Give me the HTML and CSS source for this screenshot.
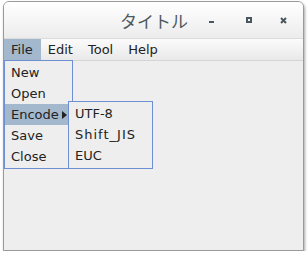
FILE: index.html
```html
<!DOCTYPE html>
<html lang="ja">
<head>
  <meta charset="UTF-8">
  <title>タイトル</title>
  <link rel="stylesheet" href="styles.css">
</head>
<body>
  <div class="window">
    <div class="titlebar">
      <span class="title">タイトル</span>
      <div class="controls">
        <span class="btn btn-min"></span>
        <span class="btn btn-max"></span>
        <span class="btn btn-close">
          <svg width="7" height="7" viewBox="0 0 7 7"><path d="M1 1L6 6M6 1L1 6" stroke="#4a575e" stroke-width="2"/></svg>
        </span>
      </div>
    </div>
    <div class="menubar">
      <span class="menu open">File</span>
      <span class="menu">Edit</span>
      <span class="menu">Tool</span>
      <span class="menu">Help</span>
    </div>
    <div class="content">
      <ul class="popup file-menu">
        <li>New</li>
        <li>Open</li>
        <li class="active">Encode<span class="arrow"></span></li>
        <li>Save</li>
        <li>Close</li>
      </ul>
      <ul class="popup encode-menu">
        <li>UTF-8</li>
        <li class="wide">Shift_JIS</li>
        <li>EUC</li>
      </ul>
    </div>
  </div>
</body>
</html>
```

FILE: styles.css
```css
body {
  margin: 0;
  background: #fff;
  font-family: 'DejaVu Sans', sans-serif;
  font-size: 13px;
  color: #222;
}
.window {
  margin: 1px 0 0 3px;
  width: 299px;
  height: 248px;
  border: 1px solid #9a9a9a;
  border-radius: 6px 6px 0 0;
  background: #eeeeee;
  box-shadow: 1px 2px 3px rgba(0,0,0,0.35);
  display: flex;
  flex-direction: column;
  overflow: hidden;
}
.titlebar {
  height: 36px;
  flex: none;
  display: flex;
  align-items: center;
  background: linear-gradient(#ffffff, #ececec);
  border-bottom: 1px solid #dcdcdc;
}
.title {
  margin-left: 116px;
  font-family: 'Noto Sans CJK JP', sans-serif;
  font-size: 17px;
  color: #4f5a60;
}
.controls {
  margin-left: auto;
  margin-right: 16px;
  display: flex;
  align-items: center;
}
.btn {
  width: 7px;
  height: 7px;
  display: flex;
  align-items: center;
  justify-content: center;
}
.btn-min {
  margin-right: 30px;
}
.btn-max {
  margin-right: 28px;
}
.btn-min::before {
  content: '';
  width: 5px;
  height: 2px;
  margin-top: 4px;
  background: #4a575e;
}
.btn-max::before {
  content: '';
  width: 2px;
  height: 2px;
  border: 2px solid #4a575e;
}
.menubar {
  height: 21px;
  flex: none;
  display: flex;
  background: linear-gradient(#fbfbfb, #e9e9e9);
  border-bottom: 1px solid #d4d4d4;
}
.menu {
  padding: 0 8px 0 7px;
  line-height: 21px;
}
.menu.open {
  background: #a3b7cd;
}
.content {
  flex: 1;
  position: relative;
}
.popup {
  position: absolute;
  margin: 0;
  padding: 1px 0 0;
  list-style: none;
  background: #eeeeee;
  border: 1px solid #6e8fd1;
}
.popup li {
  height: 21px;
  line-height: 21px;
  padding-left: 6px;
  position: relative;
}
.popup li.active {
  background: #a3b7cd;
}
.popup li.wide {
  letter-spacing: 1px;
}
.file-menu {
  left: 0;
  top: -1px;
  width: 67px;
  height: 106px;
}
.encode-menu {
  left: 64px;
  top: 40px;
  width: 83px;
  height: 65px;
}
.arrow {
  position: absolute;
  left: 57px;
  top: 7px;
  border-left: 5px solid #222;
  border-top: 4px solid transparent;
  border-bottom: 4px solid transparent;
}
```
